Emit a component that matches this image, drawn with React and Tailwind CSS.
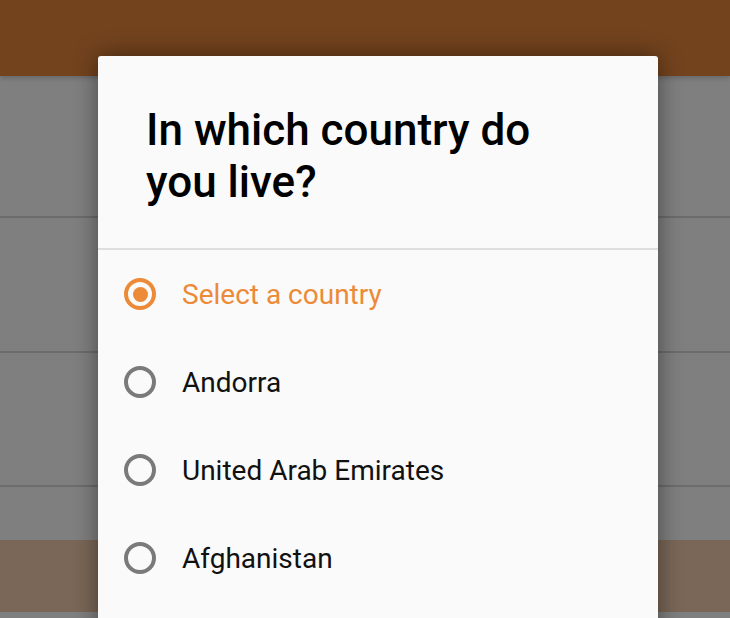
import React from "react";

const options = [
  { label: "Select a country", selected: true },
  { label: "Andorra" },
  { label: "United Arab Emirates" },
  { label: "Afghanistan" },
];

function Radio({ selected }) {
  if (selected) {
    return (
      <div className="w-[32px] h-[32px] rounded-full border-[4px] border-[#ec8a37] flex items-center justify-center shrink-0">
        <div className="w-[15px] h-[15px] rounded-full bg-[#ec8a37]" />
      </div>
    );
  }
  return <div className="w-[32px] h-[32px] rounded-full border-[4px] border-[#7a7a7a] shrink-0" />;
}

export default function App() {
  return (
    <div
      className="relative w-[730px] h-[618px] overflow-hidden bg-[#7f7f7f]"
      style={{ fontFamily: "Roboto, 'Noto Sans', sans-serif" }}
    >
      <div className="flex flex-col">
        <div className="h-[76px] bg-[#73431e] shadow-[0_2px_5px_rgba(0,0,0,0.2)]" />
        <div className="h-[140px]" />
        <div className="h-[2px] bg-[#6c6c6c]" />
        <div className="h-[133px]" />
        <div className="h-[2px] bg-[#6c6c6c]" />
        <div className="h-[132px]" />
        <div className="h-[2px] bg-[#6c6c6c]" />
        <div className="h-[53px]" />
        <div className="h-[72px] bg-[#7a6757]" />
        <div className="h-[6px]" />
      </div>

      <div className="absolute left-[98px] top-[56px] w-[560px] h-[600px] bg-[#fafafa] rounded-t-[3px] shadow-[0_0_24px_rgba(0,0,0,0.45)]">
        <div className="pl-[48px] pr-[64px] pt-[48px] pb-[40px]">
          <h1 className="text-[44px] leading-[52px] font-medium text-black">
            In which country do you live?
          </h1>
        </div>
        <div className="h-[2px] bg-[#dedede]" />
        <div className="flex flex-col">
          {options.map((o) => (
            <div key={o.label} className="h-[88px] flex items-center pl-[26px]">
              <Radio selected={o.selected} />
              <span
                className={`ml-[26px] text-[28px] leading-[33px] ${
                  o.selected ? "text-[#ec8a37]" : "text-[#111111]"
                }`}
              >
                {o.label}
              </span>
            </div>
          ))}
        </div>
      </div>
    </div>
  );
}
